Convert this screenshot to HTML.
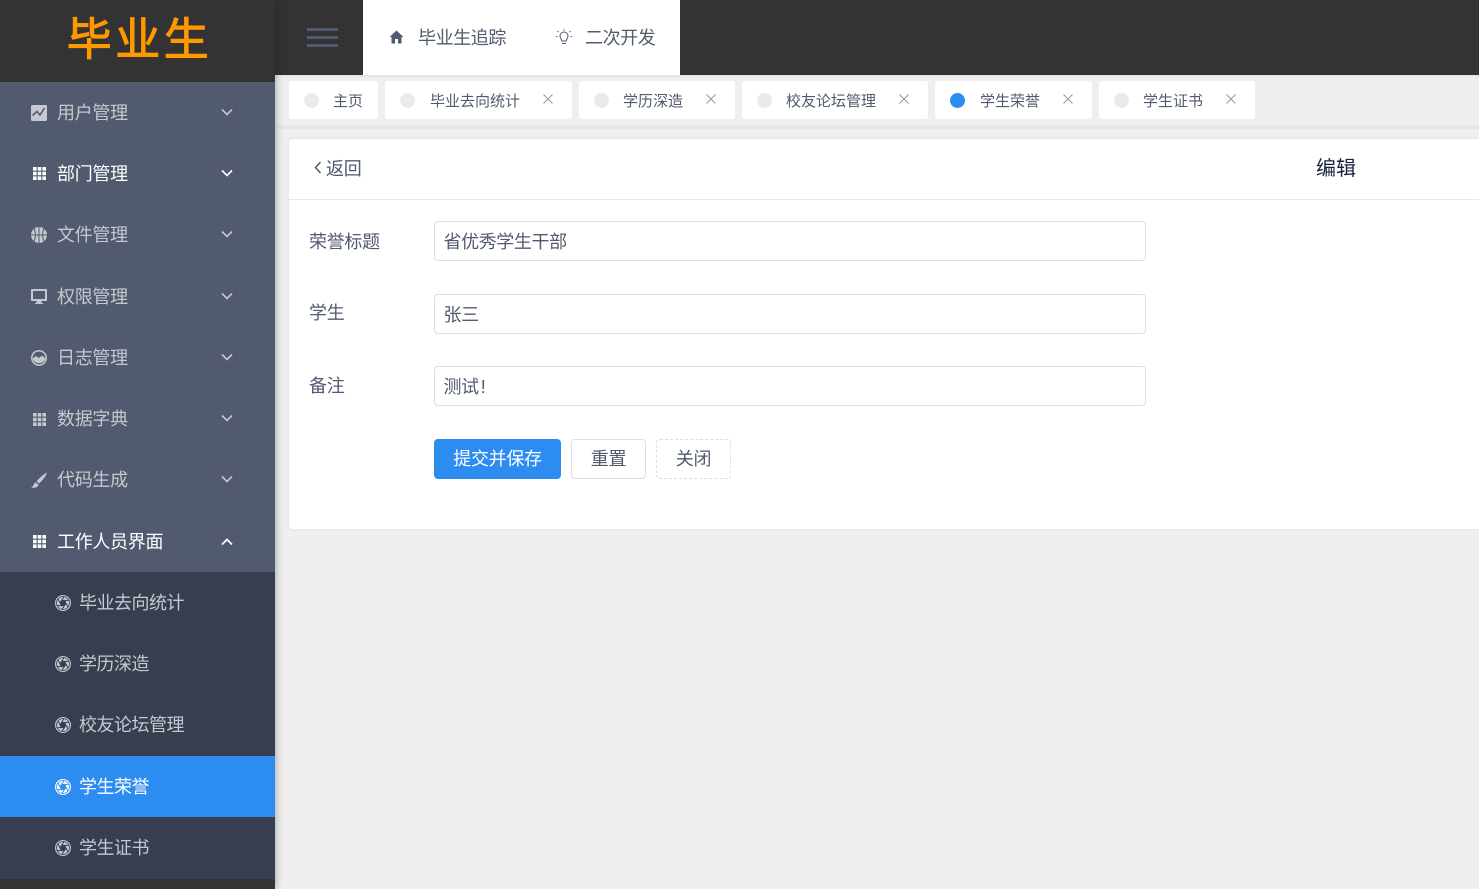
<!DOCTYPE html>
<html lang="zh">
<head>
<meta charset="utf-8">
<title>毕业生</title>
<style>
*{box-sizing:border-box;margin:0;padding:0}
html,body{width:1479px;height:889px;overflow:hidden;background:#efefef}
body{position:relative;font-family:"Liberation Sans","WenQuanYi Zen Hei","Noto Sans CJK SC",sans-serif;color:#515a6e}
.a{position:absolute;white-space:nowrap}
#top{left:275px;top:0;width:1204px;height:75px;background:#333}
#nav{left:363px;top:0;width:317px;height:75px;background:#fff}
#strip{left:275px;top:75px;width:1204px;height:54px;background:#efefef;border-bottom:4px solid #e6e6e6;box-shadow:inset 0 3px 3px -2px #ddd}
#side{left:0;top:0;width:275px;height:889px;background:#333;box-shadow:2px 0 6px rgba(0,21,41,.25)}
#menu{left:0;top:82px;width:275px;height:490px;background:#515a6e}
#sub{left:0;top:572px;width:275px;height:307px;background:#363e4f}
#act{left:0;top:756px;width:275px;height:61px;background:#2d8cf0}
.logo{left:2px;top:7px;width:275px;text-align:center;font-size:45px;line-height:65px;color:#ff9900;letter-spacing:3.500px;-webkit-text-stroke:1px #ff9900;font-family:"Liberation Sans","Noto Sans CJK SC",sans-serif}
.m{left:57px;font-size:18px;line-height:24px;color:#c5c8ce;letter-spacing:-.3px}
.s{left:79px;font-size:18px;line-height:24px;color:#c5c8ce;letter-spacing:-.5px}
.w{color:#fff}
.i{position:absolute;display:block}
.tab{position:absolute;top:81px;height:38px;background:#fff;border-radius:3px}
.dot{position:absolute;top:12px;width:15px;height:15px;border-radius:50%;background:#e8eaec}
.tt{position:absolute;top:10px;font-size:15px;line-height:22px;letter-spacing:0;color:#515a6e;white-space:nowrap}
.x{position:absolute;top:13px;width:10px;height:10px}
#card{left:289px;top:139px;width:1195px;height:390px;background:#fff;border-radius:4px 0 0 4px;box-shadow:0 0 3px rgba(0,0,0,.07)}
#hr{left:289px;top:199px;width:1190px;height:1px;background:#e8eaec}
.lb{left:309px;font-size:18px;line-height:24px;letter-spacing:-.3px;color:#515a6e}
.in{left:434px;width:712px;height:40px;border:1px solid #dcdee2;border-radius:4px;background:#fff;padding-left:8.500px;font-size:18px;line-height:40px;letter-spacing:-.4px;color:#515a6e}
.btn{top:439px;height:40px;border-radius:4px;font-size:18px;line-height:39px;text-align:center;letter-spacing:-.3px}
</style>
</head>
<body>
<div class="a" id="top"></div>
<div class="a" id="nav"></div>
<div class="a" id="strip"></div>

<div class="a" id="side"></div>
<div class="a" id="menu"></div>
<div class="a" id="sub"></div>
<div class="a" id="act"></div>
<div class="a logo">毕业生</div>

<!-- main menu -->
<svg class="i" style="left:31px;top:105px" width="16" height="16" viewBox="0 0 16 16"><rect width="16" height="16" rx="1.500" fill="#c5c8ce"/><path d="M1.500 10.500L6 6.500l3 3.500 4.500-7" fill="none" stroke="#515a6e" stroke-width="1.600"/></svg>
<div class="a m" style="top:101px">用户管理</div>
<svg class="i" style="left:33px;top:167px" width="13" height="13" viewBox="0 0 13 13" fill="#fff"><path d="M0 0h3.600v3.600H0zM4.700 0h3.600v3.600H4.700zM9.400 0H13v3.600H9.400zM0 4.700h3.600v3.600H0zM4.700 4.700h3.600v3.600H4.700zM9.400 4.700H13v3.600H9.400zM0 9.400h3.600V13H0zM4.700 9.400h3.600V13H4.700zM9.400 9.400H13V13H9.400z"/></svg>
<div class="a m w" style="top:162px">部门管理</div>
<svg class="i" style="left:31px;top:227px" width="16" height="16" viewBox="0 0 16 16"><circle cx="8" cy="8" r="8" fill="#c5c8ce"/><path d="M8 0v16M0 8h16M3 1.500q3 6.500 0 13M13 1.500q-3 6.500 0 13" fill="none" stroke="#515a6e" stroke-width="1"/></svg>
<div class="a m" style="top:223px">文件管理</div>
<svg class="i" style="left:31px;top:289px" width="16" height="16" viewBox="0 0 16 16"><path d="M1 0h14a1 1 0 0 1 1 1v10a1 1 0 0 1-1 1h-4.500v2H12v1H4v-1h1.500v-2H1a1 1 0 0 1-1-1V1a1 1 0 0 1 1-1zm1 2v8h12V2z" fill="#c5c8ce" fill-rule="evenodd"/></svg>
<div class="a m" style="top:285px">权限管理</div>
<svg class="i" style="left:31px;top:350px" width="16" height="16" viewBox="0 0 16 16"><circle cx="8" cy="8" r="7.200" fill="#515a6e" stroke="#c5c8ce" stroke-width="1.500"/><path d="M1.500 8.500L5 6l3 2 3-2.500 3.500 3A6.800 6.800 0 0 1 1.500 8.500z" fill="#c5c8ce"/></svg>
<div class="a m" style="top:346px">日志管理</div>
<svg class="i" style="left:33px;top:413px" width="13" height="13" viewBox="0 0 13 13" fill="#c5c8ce"><path d="M0 0h3.600v3.600H0zM4.700 0h3.600v3.600H4.700zM9.400 0H13v3.600H9.400zM0 4.700h3.600v3.600H0zM4.700 4.700h3.600v3.600H4.700zM9.400 4.700H13v3.600H9.400zM0 9.400h3.600V13H0zM4.700 9.400h3.600V13H4.700zM9.400 9.400H13V13H9.400z"/></svg>
<div class="a m" style="top:407px">数据字典</div>
<svg class="i" style="left:31px;top:472px" width="16" height="16" viewBox="0 0 16 16"><path d="M16 0.500C13 2 8 6 5.500 9.500L8 11.500C11 9 15 4 16 0.500zM4.500 10.500C2.500 11 3 14.500 0 15.500c3 .8 7 .3 7.500-3z" fill="#c5c8ce"/></svg>
<div class="a m" style="top:468px">代码生成</div>
<svg class="i" style="left:33px;top:535px" width="13" height="13" viewBox="0 0 13 13" fill="#fff"><path d="M0 0h3.600v3.600H0zM4.700 0h3.600v3.600H4.700zM9.400 0H13v3.600H9.400zM0 4.700h3.600v3.600H0zM4.700 4.700h3.600v3.600H4.700zM9.400 4.700H13v3.600H9.400zM0 9.400h3.600V13H0zM4.700 9.400h3.600V13H4.700zM9.400 9.400H13V13H9.400z"/></svg>
<div class="a m w" style="top:530px">工作人员界面</div>

<!-- chevrons -->
<svg class="i" style="left:221px;top:108px" width="12" height="8" viewBox="0 0 12 8"><path d="M1 1.500l5 5 5-5" fill="none" stroke="#c5c8ce" stroke-width="1.600"/></svg>
<svg class="i" style="left:221px;top:169px" width="12" height="8" viewBox="0 0 12 8"><path d="M1 1.500l5 5 5-5" fill="none" stroke="#fff" stroke-width="1.600"/></svg>
<svg class="i" style="left:221px;top:230px" width="12" height="8" viewBox="0 0 12 8"><path d="M1 1.500l5 5 5-5" fill="none" stroke="#c5c8ce" stroke-width="1.600"/></svg>
<svg class="i" style="left:221px;top:292px" width="12" height="8" viewBox="0 0 12 8"><path d="M1 1.500l5 5 5-5" fill="none" stroke="#c5c8ce" stroke-width="1.600"/></svg>
<svg class="i" style="left:221px;top:353px" width="12" height="8" viewBox="0 0 12 8"><path d="M1 1.500l5 5 5-5" fill="none" stroke="#c5c8ce" stroke-width="1.600"/></svg>
<svg class="i" style="left:221px;top:414px" width="12" height="8" viewBox="0 0 12 8"><path d="M1 1.500l5 5 5-5" fill="none" stroke="#c5c8ce" stroke-width="1.600"/></svg>
<svg class="i" style="left:221px;top:475px" width="12" height="8" viewBox="0 0 12 8"><path d="M1 1.500l5 5 5-5" fill="none" stroke="#c5c8ce" stroke-width="1.600"/></svg>
<svg class="i" style="left:221px;top:538px" width="12" height="8" viewBox="0 0 12 8"><path d="M1 6.500l5-5 5 5" fill="none" stroke="#fff" stroke-width="1.800"/></svg>

<!-- sub menu -->
<svg class="i" style="left:55px;top:595px" width="16" height="16" viewBox="0 0 16 16"><circle cx="8" cy="8" r="8" fill="#c5c8ce"/><circle cx="8" cy="8" r="6.500" fill="none" stroke="#363e4f" stroke-width=".8"/><path d="M11 8L7 14.500M9.500 10.600L1.900 10.580M6.500 10.600L2.900 3.900M5 8L9 1.500M6.500 5.400L14.100 5.420M9.500 5.400L13.100 12.100" stroke="#363e4f" stroke-width="1" fill="none"/><circle cx="8" cy="8" r="2.600" fill="#363e4f"/></svg>
<div class="a s" style="top:591px">毕业去向统计</div>
<svg class="i" style="left:55px;top:656px" width="16" height="16" viewBox="0 0 16 16"><circle cx="8" cy="8" r="8" fill="#c5c8ce"/><circle cx="8" cy="8" r="6.500" fill="none" stroke="#363e4f" stroke-width=".8"/><path d="M11 8L7 14.500M9.500 10.600L1.900 10.580M6.500 10.600L2.900 3.900M5 8L9 1.500M6.500 5.400L14.100 5.420M9.500 5.400L13.100 12.100" stroke="#363e4f" stroke-width="1" fill="none"/><circle cx="8" cy="8" r="2.600" fill="#363e4f"/></svg>
<div class="a s" style="top:652px">学历深造</div>
<svg class="i" style="left:55px;top:717px" width="16" height="16" viewBox="0 0 16 16"><circle cx="8" cy="8" r="8" fill="#c5c8ce"/><circle cx="8" cy="8" r="6.500" fill="none" stroke="#363e4f" stroke-width=".8"/><path d="M11 8L7 14.500M9.500 10.600L1.900 10.580M6.500 10.600L2.900 3.900M5 8L9 1.500M6.500 5.400L14.100 5.420M9.500 5.400L13.100 12.100" stroke="#363e4f" stroke-width="1" fill="none"/><circle cx="8" cy="8" r="2.600" fill="#363e4f"/></svg>
<div class="a s" style="top:713px">校友论坛管理</div>
<svg class="i" style="left:55px;top:779px" width="16" height="16" viewBox="0 0 16 16"><circle cx="8" cy="8" r="8" fill="#fff"/><circle cx="8" cy="8" r="6.500" fill="none" stroke="#2d8cf0" stroke-width=".8"/><path d="M11 8L7 14.500M9.500 10.600L1.900 10.580M6.500 10.600L2.900 3.900M5 8L9 1.500M6.500 5.400L14.100 5.420M9.500 5.400L13.100 12.100" stroke="#2d8cf0" stroke-width="1" fill="none"/><circle cx="8" cy="8" r="2.600" fill="#2d8cf0"/></svg>
<div class="a s w" style="top:775px">学生荣誉</div>
<svg class="i" style="left:55px;top:840px" width="16" height="16" viewBox="0 0 16 16"><circle cx="8" cy="8" r="8" fill="#c5c8ce"/><circle cx="8" cy="8" r="6.500" fill="none" stroke="#363e4f" stroke-width=".8"/><path d="M11 8L7 14.500M9.500 10.600L1.900 10.580M6.500 10.600L2.900 3.900M5 8L9 1.500M6.500 5.400L14.100 5.420M9.500 5.400L13.100 12.100" stroke="#363e4f" stroke-width="1" fill="none"/><circle cx="8" cy="8" r="2.600" fill="#363e4f"/></svg>
<div class="a s" style="top:836px">学生证书</div>

<!-- top bar -->
<svg class="i" style="left:307px;top:27px" width="31" height="21" viewBox="0 0 31 21" fill="#515a6e"><rect y="1" width="31" height="3"/><rect y="9" width="31" height="3"/><rect y="17" width="31" height="3"/></svg>
<svg class="i" style="left:389px;top:30px" width="15" height="14" viewBox="0 0 15 14"><path d="M7.500 0.500L0.500 7h2v6.500h3.500V9h3v4.500h3.500V7h2z" fill="#515a6e"/></svg>
<div class="a" style="left:418px;top:25px;font-size:18px;line-height:26px;letter-spacing:-.4px">毕业生追踪</div>
<svg class="i" style="left:556px;top:29px" width="16" height="16" viewBox="0 0 16 16"><g fill="none" stroke="#515a6e" stroke-width="1"><path d="M5.800 12c0-2-1.800-2.500-1.800-5a4 4 0 0 1 8 0c0 2.500-1.800 3-1.800 5zM6 14.500h4M8 0v1.500M1.500 2l1 1M14.500 2l-1 1M0 7.500h1.500M14.500 7.500H16"/></g></svg>
<div class="a" style="left:585px;top:25px;font-size:18px;line-height:26px;letter-spacing:-.4px">二次开发</div>

<!-- tabs -->
<div class="tab" style="left:289px;width:89px"><span class="dot" style="left:15px"></span><span class="tt" style="left:44px">主页</span></div>
<div class="tab" style="left:385px;width:187px"><span class="dot" style="left:15px"></span><span class="tt" style="left:45px">毕业去向统计</span><svg class="x" style="left:158px" viewBox="0 0 10 10"><path d="M.5.500l9 9M9.500.500l-9 9" stroke="#999" fill="none"/></svg></div>
<div class="tab" style="left:579px;width:156px"><span class="dot" style="left:15px"></span><span class="tt" style="left:44px">学历深造</span><svg class="x" style="left:127px" viewBox="0 0 10 10"><path d="M.5.500l9 9M9.500.500l-9 9" stroke="#999" fill="none"/></svg></div>
<div class="tab" style="left:742px;width:186px"><span class="dot" style="left:15px"></span><span class="tt" style="left:44px">校友论坛管理</span><svg class="x" style="left:157px" viewBox="0 0 10 10"><path d="M.5.500l9 9M9.500.500l-9 9" stroke="#999" fill="none"/></svg></div>
<div class="tab" style="left:935px;width:157px"><span class="dot" style="left:15px;background:#2d8cf0"></span><span class="tt" style="left:45px">学生荣誉</span><svg class="x" style="left:128px" viewBox="0 0 10 10"><path d="M.5.500l9 9M9.500.500l-9 9" stroke="#999" fill="none"/></svg></div>
<div class="tab" style="left:1099px;width:156px"><span class="dot" style="left:15px"></span><span class="tt" style="left:44px">学生证书</span><svg class="x" style="left:127px" viewBox="0 0 10 10"><path d="M.5.500l9 9M9.500.500l-9 9" stroke="#999" fill="none"/></svg></div>

<!-- card -->
<div class="a" id="card"></div>
<div class="a" id="hr"></div>
<svg class="i" style="left:314px;top:161px" width="8" height="13" viewBox="0 0 8 13"><path d="M6.500 1L1.500 6.500l5 5.500" fill="none" stroke="#515a6e" stroke-width="1.500"/></svg>
<div class="a" style="left:326px;top:157px;font-size:18px;line-height:24px;letter-spacing:-.3px">返回</div>
<div class="a" style="left:1316px;top:156px;font-size:20px;line-height:26px;letter-spacing:0;color:#17233d">编辑</div>

<div class="a lb" style="top:230px">荣誉标题</div>
<div class="a in" style="top:221px">省优秀学生干部</div>
<div class="a lb" style="top:301px">学生</div>
<div class="a in" style="top:294px">张三</div>
<div class="a lb" style="top:374px">备注</div>
<div class="a in" style="top:366px">测试<span style="margin-left:2px">!</span></div>

<div class="a btn" style="left:434px;width:127px;background:#2d8cf0;color:#fff;border:1px solid #2d8cf0">提交并保存</div>
<div class="a btn" style="left:571px;width:75px;background:#fff;border:1px solid #dcdee2">重置</div>
<div class="a btn" style="left:656px;width:75px;background:#fff;border:1px dashed #dcdee2">关闭</div>
</body>
</html>
